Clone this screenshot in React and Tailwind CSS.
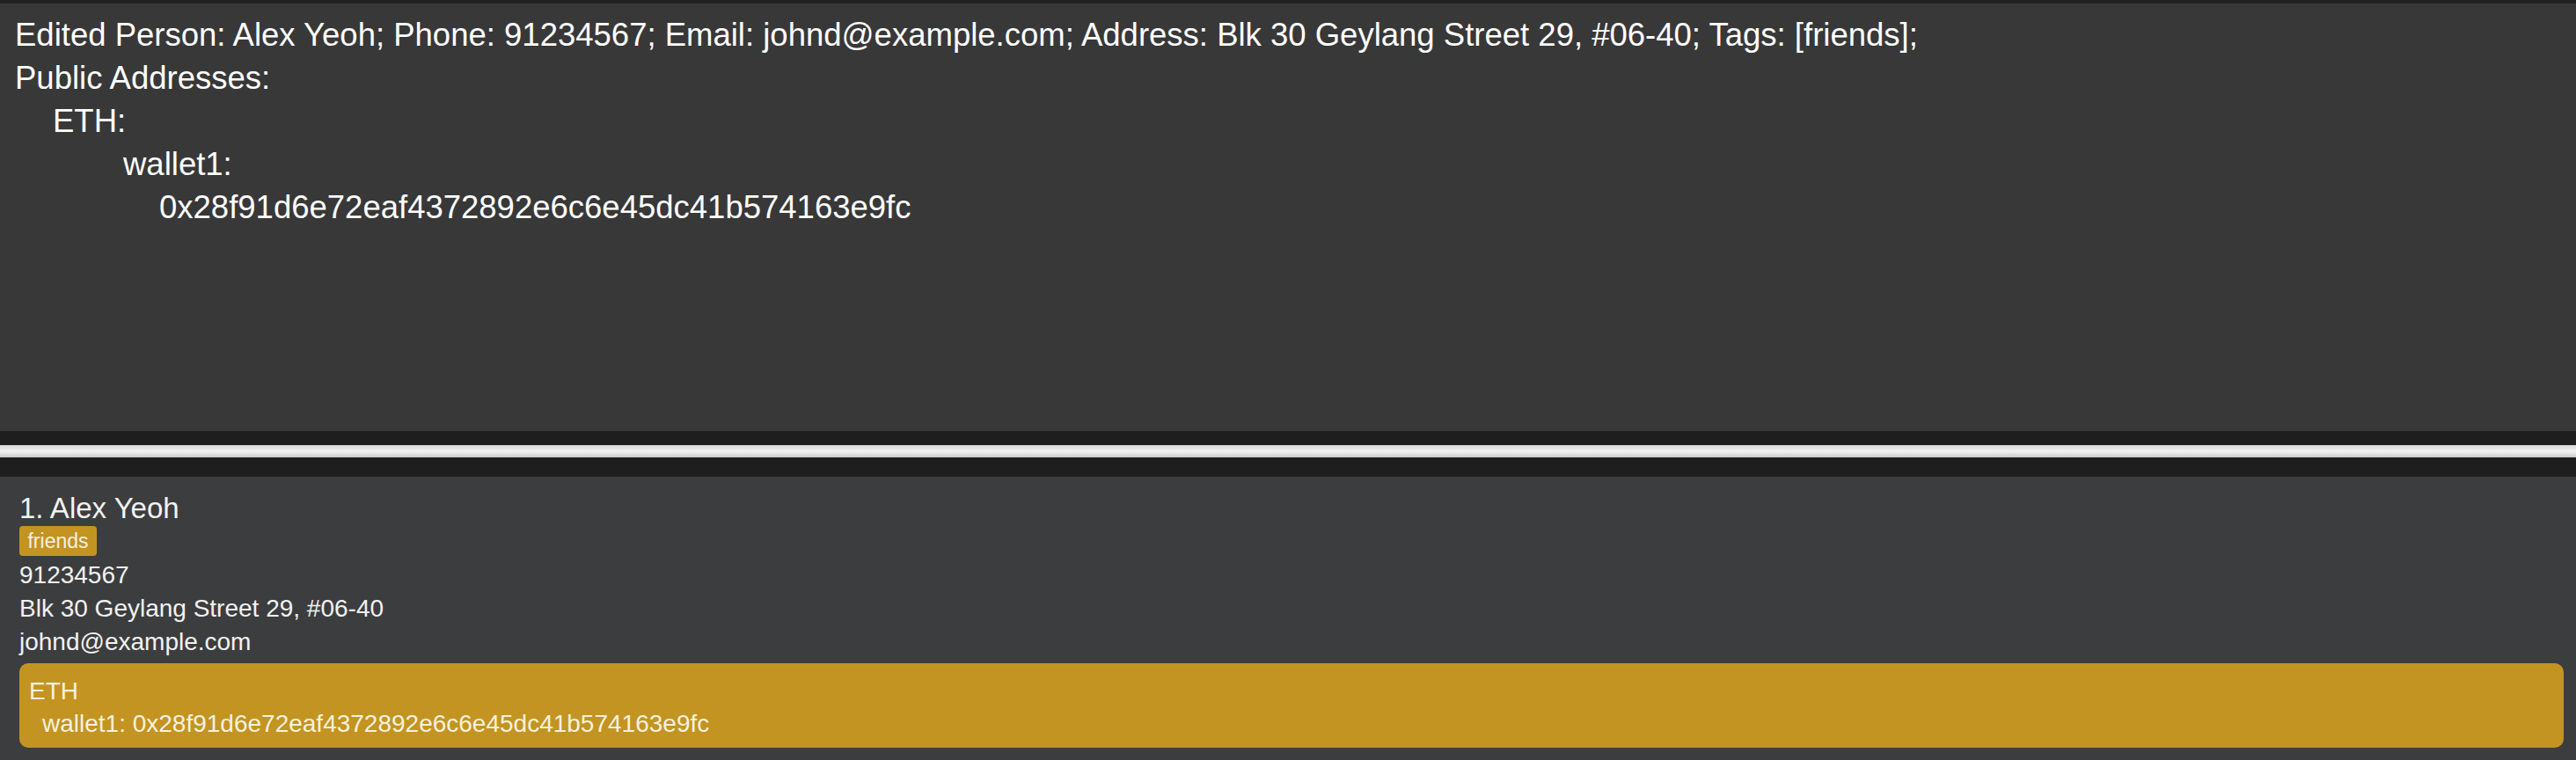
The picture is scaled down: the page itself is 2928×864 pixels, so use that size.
export default function App() {
  const font = { fontFamily: '"Liberation Sans", Arial, sans-serif' };
  return (
    <div className="w-full h-[864px] flex flex-col bg-[#1e1e1e] overflow-hidden" style={font}>
      <div className="h-[4px] bg-[#212121]" />
      <div className="h-[486px] bg-[#383838] pl-[17px] pt-[11px] text-white text-[36.5px] leading-[49px] whitespace-pre">
        <div>Edited Person: Alex Yeoh; Phone: 91234567; Email: johnd@example.com; Address: Blk 30 Geylang Street 29, #06-40; Tags: [friends];</div>
        <div>Public Addresses:</div>
        <div className="pl-[43px]">ETH:</div>
        <div className="pl-[123px]">wallet1:</div>
        <div className="pl-[164px]">0x28f91d6e72eaf4372892e6c6e45dc41b574163e9fc</div>
      </div>
      <div className="h-[16px] bg-[#1e1e1e]" />
      <div className="h-[14px] bg-gradient-to-b from-[#d6d6d6] via-[#f2f2f2] to-[#c9c9c9]" />
      <div className="h-[22px] bg-[#1e1e1e]" />
      <div className="flex-1 bg-[#3c3d3f] px-[22px] pt-[16px] text-[#f2f2f2]">
        <div className="text-[33px] leading-[40px]">1. Alex Yeoh</div>
        <div className="flex">
          <div className="h-[34px] w-[88px] rounded-[4px] bg-[#c39422] text-[23px] leading-[34px] text-[#f4efe0] flex justify-center">friends</div>
        </div>
        <div className="mt-[3px] text-[28px] leading-[38px]">91234567</div>
        <div className="text-[28px] leading-[38px]">Blk 30 Geylang Street 29, #06-40</div>
        <div className="text-[28px] leading-[38px]">johnd@example.com</div>
        <div className="mt-[5px] mr-[-8px] rounded-[10px] bg-[#c39422] pl-[11px] pt-[13px] pb-[9px] text-[28px] text-[#f6f1de]">
          <div className="leading-[37px]">ETH</div>
          <div className="leading-[37px] pl-[15px]">wallet1: 0x28f91d6e72eaf4372892e6c6e45dc41b574163e9fc</div>
        </div>
      </div>
    </div>
  );
}
